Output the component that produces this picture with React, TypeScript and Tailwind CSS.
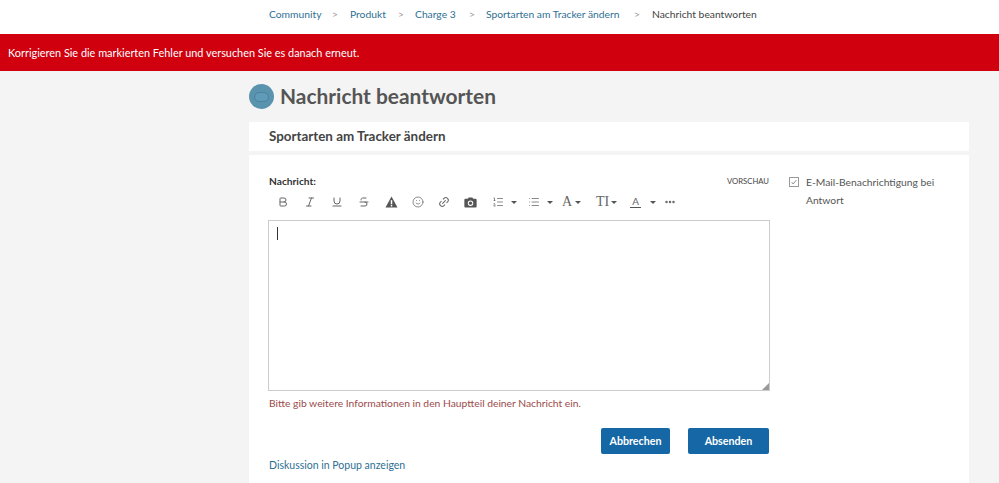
import { Bold, Ellipsis, Italic, Link2, List, ListOrdered, Smile, Strikethrough, Underline } from "lucide-react";

function Caret() {
    return <span className="w-0 h-0 border-x-[3px] border-x-transparent border-t-[3px] border-t-[#555]"></span>;
}

function Crumb({ label, width }: { label: string; width: string }) {
    return <a className={`${width} text-[#2f6f94] whitespace-nowrap`}>{label}</a>;
}

export default function App() {
    const iconCls = "w-[12px] h-[12px] text-[#666]";
    return (
        <div className="h-[483px] overflow-hidden bg-[#f4f4f4] text-[#444] font-['Lato',sans-serif]">
            {/* breadcrumb */}
            <div className="h-[34px] bg-white flex items-center pl-[269px] pb-1 text-[10.3px]">
                <Crumb label="Community" width="w-[52px]" />
                <span className="w-[29px] pl-[11px] text-[#999]">&gt;</span>
                <Crumb label="Produkt" width="w-[36px]" />
                <span className="w-[29px] pl-[12px] text-[#999]">&gt;</span>
                <Crumb label="Charge 3" width="w-[42px]" />
                <span className="w-[29px] pl-[12px] text-[#999]">&gt;</span>
                <Crumb label="Sportarten am Tracker ändern" width="w-[137px]" />
                <span className="w-[29px] pl-[11px] text-[#999]">&gt;</span>
                <span className="text-[#444] whitespace-nowrap">Nachricht beantworten</span>
            </div>

            {/* error banner */}
            <div className="h-[37px] bg-[#d0000f] flex items-center pl-2 pt-px text-white text-[10.9px]">
                Korrigieren Sie die markierten Fehler und versuchen Sie es danach erneut.
            </div>

            <div className="w-[720px] ml-[249px]">
                <div className="h-[51px] flex items-center gap-[6px]">
                    <div className="w-[25px] h-[25px] rounded-full bg-[#5a93ad] flex items-center justify-center">
                        <div className="w-[15px] h-[10px] rounded-full border border-[#4a82a0] bg-[#5f9bb6]"></div>
                    </div>
                    <h1 className="text-[20.9px] font-bold text-[#555] leading-none">Nachricht beantworten</h1>
                </div>

                <div className="h-[29px] bg-white pl-5 flex items-center text-[13.4px] font-bold text-[#444]">
                    Sportarten am Tracker ändern
                </div>

                <div className="mt-[4px] h-[330px] bg-white flex pl-[19px] pt-[20px]">
                    <div className="w-[502px]">
                        <div className="flex justify-between items-center h-[14px] pl-px pr-px">
                            <span className="text-[10.2px] font-bold text-[#333]">Nachricht:</span>
                            <span className="text-[7.7px] text-[#444]">VORSCHAU</span>
                        </div>
                        <div className="flex items-center h-[22px] mt-[2px] text-[#666]">
                            <span className="w-[27px] flex justify-center ml-[1px]"><Bold className={iconCls} /></span>
                            <span className="w-[27px] flex justify-center"><Italic className={iconCls} /></span>
                            <span className="w-[27px] flex justify-center"><Underline className={iconCls} /></span>
                            <span className="w-[28px] flex justify-center"><Strikethrough className={iconCls} /></span>
                            <span className="w-[27px] flex justify-center">
                                <svg viewBox="0 0 14 13" className="w-[13px] h-[12px]">
                                    <path d="M7 0.5 L13.5 12.5 H0.5 Z" fill="#555" />
                                    <rect x="6.2" y="4.5" width="1.6" height="4.5" fill="#fff" />
                                    <rect x="6.2" y="9.8" width="1.6" height="1.6" fill="#fff" />
                                </svg>
                            </span>
                            <span className="w-[26px] flex justify-center"><Smile className={iconCls} strokeWidth={1.5} /></span>
                            <span className="w-[26px] flex justify-center"><Link2 className={`${iconCls} -rotate-45`} /></span>
                            <span className="w-[27px] flex justify-center">
                                <svg viewBox="0 0 14 12" className="w-[13px] h-[11px]">
                                    <path fillRule="evenodd" fill="#555" d="M1.5 2 H4 L5 0.5 H9 L10 2 H12.5 A1.2 1.2 0 0 1 13.7 3.2 V10.3 A1.2 1.2 0 0 1 12.5 11.5 H1.5 A1.2 1.2 0 0 1 0.3 10.3 V3.2 A1.2 1.2 0 0 1 1.5 2 Z M7 3.7 A3 3 0 1 0 7 9.7 A3 3 0 1 0 7 3.7 Z" />
                                    <circle cx="7" cy="6.7" r="1.8" fill="#555" />
                                </svg>
                            </span>
                            <span className="w-[27px] flex justify-center"><ListOrdered className={iconCls} strokeWidth={1.5} /></span>
                            <span className="w-[9px] flex"><Caret /></span>
                            <span className="w-[27px] flex justify-center"><List className={iconCls} strokeWidth={1.5} /></span>
                            <span className="w-[10px] flex"><Caret /></span>
                            <span className="w-[24px] pl-[5px] flex items-center gap-[3px] font-['Liberation_Serif',serif] text-[14px] leading-none">A<Caret /></span>
                            <span className="w-[36px] pl-[15px] flex items-center gap-[2px] font-['Liberation_Serif',serif] text-[14px] leading-none">TI<Caret /></span>
                            <span className="w-[24px] flex justify-end">
                                <span className="text-[10px] leading-[11px] border-b border-[#555] px-[2px]">A</span>
                            </span>
                            <span className="w-[15px] flex justify-end"><Caret /></span>
                            <span className="w-[20px] flex justify-end"><Ellipsis className="w-[12px] h-[12px]" strokeWidth={3} /></span>
                        </div>
                        <div className="relative mt-[7px] h-[171px] border border-[#ccc] bg-white">
                            <div className="absolute left-2 top-[6px] w-px h-[13px] bg-[#333]"></div>
                            <div className="absolute right-0 bottom-0 w-0 h-0 border-l-[7px] border-l-transparent border-b-[7px] border-b-[#999]"></div>
                        </div>
                        <p className="mt-[5px] pl-px text-[10.3px] leading-[14px] text-[#9b4a4a]">
                            Bitte gib weitere Informationen in den Hauptteil deiner Nachricht ein.
                        </p>
                        <div className="flex justify-end gap-[18px] mt-[18px] pr-px">
                            <button className="w-[69px] h-[26px] rounded-[2px] bg-[#1667a5] text-white text-[10.7px] font-bold">Abbrechen</button>
                            <button className="w-[81px] h-[26px] rounded-[2px] bg-[#1667a5] text-white text-[10.7px] font-bold">Absenden</button>
                        </div>
                        <a className="block mt-[4px] pl-px text-[10.5px] text-[#2f6f94]">Diskussion in Popup anzeigen</a>
                    </div>
                    <div className="flex items-start ml-[19px] text-[10.3px] leading-[17.5px] text-[#555]">
                        <span className="w-[10px] h-[10px] mt-[2px] border border-[#999] flex items-center justify-center shrink-0">
                            <svg viewBox="0 0 10 10" className="w-2 h-2"><path d="M2 5 L4 7.5 L8 2.5" fill="none" stroke="#777" strokeWidth="1" /></svg>
                        </span>
                        <span className="ml-[7px] w-[140px] -mt-px">E-Mail-Benachrichtigung bei Antwort</span>
                    </div>
                </div>
            </div>
        </div>
    );
}
